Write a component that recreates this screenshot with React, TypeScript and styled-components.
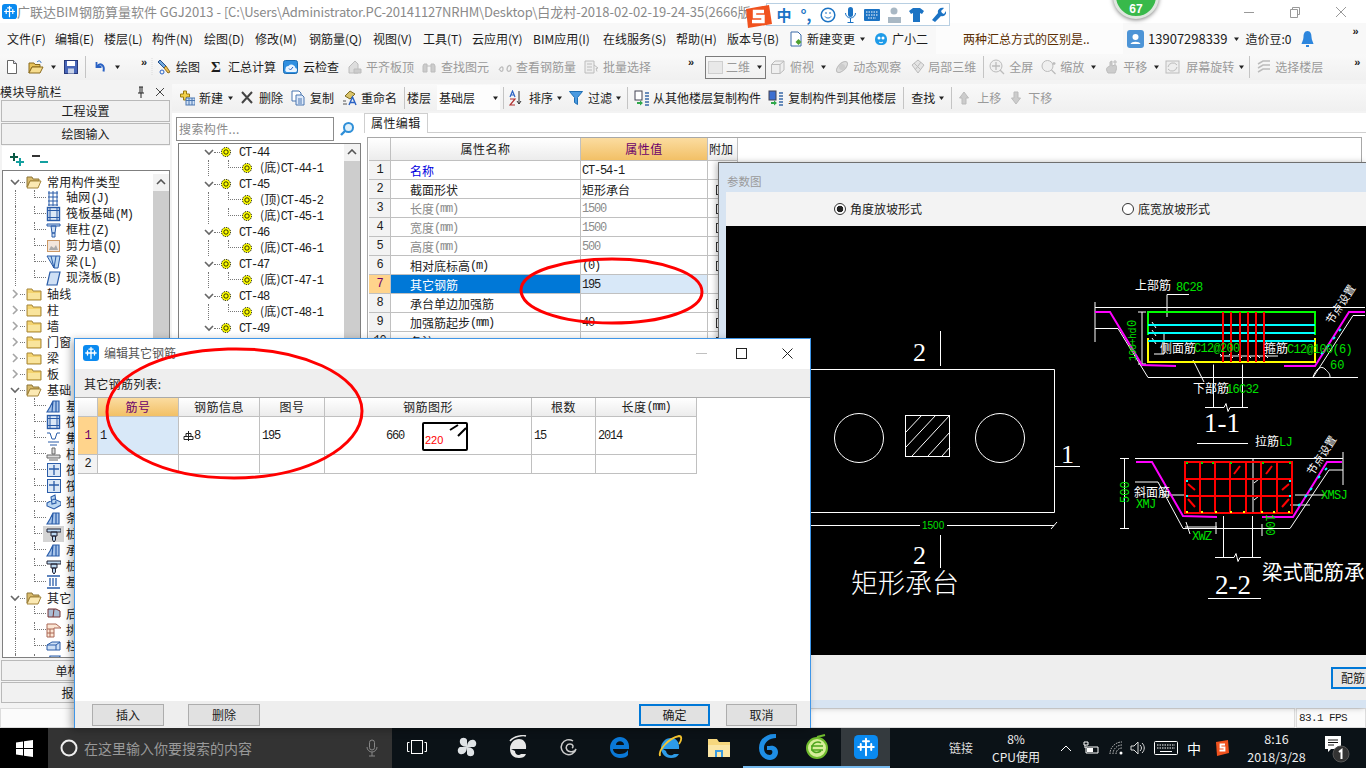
import React from "react";
import styled, { createGlobalStyle } from "styled-components";

const Global = createGlobalStyle`
  html, body { margin: 0; padding: 0; overflow: hidden; background: #f2f2f2; }
  * { box-sizing: border-box; }
  #root { width: 1366px; height: 768px; }
`;
const UI = `"Noto Sans CJK SC", "Liberation Sans", sans-serif`;

const Root = styled.div`
  position: relative; width: 1366px; height: 768px; overflow: hidden; display: flex; flex-direction: column;
  background: #f3f3f3; color: #1c1c1c; font: 12px/16px ${UI};
`;
const Mono = styled.span`
  font: 12px/16px "Liberation Mono", monospace; letter-spacing: -1.2px;
`;
const Ico = styled.svg`display: block; flex-shrink: 0;`;
const At = styled.span<{ $l?: number }>`
  display: flex; align-items: center; flex-shrink: 0; margin-left: ${p => p.$l ?? 0}px;
`;
const Sep = styled.span<{ $l: number }>`
  width: 1px; height: 22px; background: #c4c4c4; margin-left: ${p => p.$l}px; flex-shrink: 0;
`;
const Tl = styled.span<{ $l: number; $off?: boolean }>`
  margin-left: ${p => p.$l}px; white-space: nowrap; flex-shrink: 0; color: ${p => (p.$off ? "#9a9a9a" : "#1c1c1c")};
`;
const Sigma = styled.span`
  margin-left: 11px; width: 10px; font: bold 15px/16px "Liberation Serif", serif; flex-shrink: 0;
`;

/* ---------- title & menu ---------- */
const TitleBar = styled.div`
  height: 23px; background: #fff; display: flex; align-items: center; padding-left: 2px; flex-shrink: 0;
`;
const TitleText = styled.span`
  color: #8a8a8a; font-size: 13px; white-space: nowrap;
`;
const TitlePath = styled.span`letter-spacing: -.17px;`;
const WinCtl = styled.div`
  margin-left: auto; display: flex; align-items: center; padding-right: 19px;
`;
const MenuBar = styled.div`
  height: 31px; background: #f8f8f8; display: flex; align-items: center; padding: 0 0 0 7px; flex-shrink: 0;
`;
const MenuItem = styled.span<{ $w: number }>`
  width: ${p => p.$w}px; white-space: nowrap; flex-shrink: 0;
`;
const NoticeBox = styled.div`
  margin-left: 8px; width: 187px; height: 31px; background: #fcfcfc; flex-shrink: 0; display: flex; align-items: center;
  padding-left: 27px; color: #5a2d00;
`;
const Phone = styled.span`font-size: 13px; margin-left: 4px;`;
const Toolbar = styled.div`
  height: 26px; flex-shrink: 0; display: flex; align-items: center;
  background: linear-gradient(#f9f9f9, #f0f0f0); overflow: hidden;
`;
const More = styled.span<{ $l: number }>`
  margin-left: ${p => p.$l}px; font: bold 11px/12px "Liberation Sans", sans-serif; align-self: flex-start; margin-top: 2px; width: 9px; flex-shrink: 0;
`;
const Combo = styled.div`
  margin-left: 8px; width: 61px; height: 23px; border: 1px solid #7b7b7b; display: flex; align-items: center; flex-shrink: 0; padding-left: 2px; color: #9a9a9a;
`;
const Swatch = styled.span`width: 15px; height: 13px; background: #e8e8e8; border: 1px solid #cfcfcf; margin-right: 3px;`;
const FloorCombo = styled.div`
  margin-left: 6px; width: 63px; height: 25px; background: #fdfdfd; display: flex; align-items: center; padding-left: 2px; flex-shrink: 0;
`;

/* ---------- workspace ---------- */
const Workspace = styled.div`flex: 1; min-height: 0; display: flex; padding-top: 4px;`;
const LeftPanel = styled.aside`width: 170px; flex-shrink: 0; display: flex; flex-direction: column; padding-bottom: 4px;`;
const NavHead = styled.div`height: 16px; display: flex; align-items: center; font-size: 12px; letter-spacing: .4px;`;
const NavHeadIcons = styled.div`margin-left: auto; display: flex; gap: 9px; padding-right: 5px; align-items: center;`;
const NavBtn = styled.div<{ $h?: number }>`
  height: ${p => p.$h ?? 22}px; margin: 0 0 1px 1px; background: #f1f1f1; border: 1px solid #b9b9b9; text-align: center; line-height: ${p => (p.$h ?? 22) - 2}px; flex-shrink: 0;
`;
const PlusRow = styled.div`height: 24px; padding: 5px 0 0 7px; display: flex; gap: 7px; background: #fff; margin: 0 0 0 2px; flex-shrink: 0;`;
const TreeFrame = styled.div<{ $pad: number }>`
  flex: 1; min-height: 0; border: 1px solid #7f7f7f; background: #fff; display: flex; overflow: hidden; margin: 0 0 2px 2px; padding-top: ${p => p.$pad}px;
`;
const TreeList = styled.div`flex: 1; min-width: 0; overflow: hidden;`;
const TreeRow = styled.div`height: 16px; display: flex; align-items: center; white-space: nowrap;`;
const Chevron = styled.span<{ $ml: number }>`margin-left: ${p => p.$ml}px; width: 10px; display: flex; flex-shrink: 0;`;
const Dots = styled.span<{ $w: number }>`width: ${p => p.$w}px; border-top: 1px dotted #777; flex-shrink: 0;`;
const Spine = styled.span<{ $ml: number; $w: number }>`
  margin-left: ${p => p.$ml}px; width: ${p => p.$w}px; height: 16px; border-left: 1px dotted #777; flex-shrink: 0;
`;
const Elbow = styled.span<{ $w: number }>`
  width: ${p => p.$w}px; height: 8px; align-self: flex-start; border-left: 1px dotted #777; border-bottom: 1px dotted #777; flex-shrink: 0;
`;
const TreeLabel = styled.span<{ $ml: number }>`margin-left: ${p => p.$ml}px; letter-spacing: .2px;`;
const SelIcon = styled.span`display: flex; background: #d4d4d4; padding: 0 3px; margin: 0 -3px;`;
const Scroll = styled.div`width: 16px; flex-shrink: 0; background: #cdcdcd; align-self: stretch; display: flex; flex-direction: column;`;
const ScrollTop = styled.div`height: 17px; background: #f2f2f2; display: flex; align-items: center; justify-content: center;`;
const MainCol = styled.div`flex: 1; min-width: 0; display: flex; flex-direction: column; margin-left: 2px;`;
const Bar2 = styled(Toolbar)`height: 27px; margin-bottom: 2px;`;
const MainBody = styled.div`flex: 1; min-height: 0; display: flex; background: #fff;`;
const SearchCol = styled.div`width: 185px; margin-left: 4px; flex-shrink: 0; display: flex; flex-direction: column; padding-top: 4px; padding-bottom: 47px;`;
const SearchRow = styled.div`height: 24px; display: flex; align-items: center; margin-bottom: 2px;`;
const SearchInput = styled.div`
  width: 158px; height: 24px; border: 1px solid #8c8c8c; background: #fff; padding: 3px 2px; color: #8a8a8a; letter-spacing: .4px;
`;
const PropCol = styled.div`flex: 1; min-width: 0; display: flex; flex-direction: column; margin-left: 3px;`;
const TabStrip = styled.div`height: 20px; border-bottom: 1px solid #cfcfcf; display: flex; flex-shrink: 0;`;
const Tab = styled.div`
  width: 64px; height: 20px; border: 1px solid #cfcfcf; border-bottom: none; background: #fff; padding-left: 6px; line-height: 18px; letter-spacing: .4px;
`;
const GridFrame = styled.div`
  flex: 1; min-height: 0; margin: 4px 4px 0 3px; border: 1px solid #a8a8a8; padding: 0 0 0 1px; overflow: hidden;
`;
const GridRow = styled.div<{ $cols: string; $h: number }>`
  display: grid; grid-template-columns: ${p => p.$cols}; height: ${p => p.$h}px;
`;
const Head = styled.div<{ $on?: boolean }>`
  display: flex; align-items: center; justify-content: center; border-right: 1px solid #c0c0c0; border-bottom: 1px solid #c0c0c0; letter-spacing: .5px;
  background: ${p => (p.$on ? "linear-gradient(#fbdca0, #f2c066)" : "linear-gradient(#fff, #ececec)")};
  color: ${p => (p.$on ? "#6b006b" : "#1c1c1c")};
`;
const HeadTight = styled(Head)`justify-content: flex-start; padding-left: 1px; letter-spacing: 0;`;
const NumCell = styled.div<{ $on?: boolean }>`
  border-right: 1px solid #c0c0c0; border-bottom: 1px solid #c0c0c0;
  background: ${p => (p.$on ? "#ffd48c" : "#f3f3f3")}; color: ${p => (p.$on ? "#6b006b" : "#1c1c1c")};
  font: 12px/18px "Liberation Mono", monospace; letter-spacing: -1.2px; display: flex; align-items: center; justify-content: center;
`;
const Cell = styled.div<{ $pad?: number; $bg?: string; $color?: string }>`
  border-right: 1px solid #c0c0c0; border-bottom: 1px solid #c0c0c0; padding-left: ${p => p.$pad ?? 2}px;
  background: ${p => p.$bg ?? "#fff"}; color: ${p => p.$color ?? "#1c1c1c"}; white-space: nowrap; overflow: hidden;
  display: flex; align-items: center;
`;
const PropCell = styled(Cell)`padding-top: 1px;`;
const Check = styled.span`width: 10px; height: 10px; border: 1px solid #333; margin-left: 8px;`;

/* ---------- status & taskbar ---------- */
const StatusBar = styled.div`height: 20px; flex-shrink: 0; display: flex; background: #f3f3f3;`;
const StatusBox = styled.div`flex: 1; border: 1px solid #dcdcdc; background: #fbfbfb;`;
const FpsBox = styled.div`
  width: 70px; margin-left: 1px; border: 1px solid #dcdcdc; background: #fbfbfb; font: 11px/18px "Liberation Mono", monospace; padding-left: 2px; letter-spacing: -.6px;
`;
const Taskbar = styled.div`height: 40px; flex-shrink: 0; background: #0b1217; display: flex; color: #fff; align-items: center;`;
const StartBtn = styled.div`width: 48px; height: 40px; background: #000; display: flex; align-items: center; justify-content: center; flex-shrink: 0;`;
const SearchBox = styled.div`
  width: 344px; height: 40px; background: #333; display: flex; align-items: center; flex-shrink: 0; padding-left: 12px; color: #999; font-size: 14px;
`;
const SearchHint = styled.span`margin-left: 6px; white-space: nowrap; color: #999;`;
const MicWrap = styled.span`margin-left: auto; margin-right: 14px; display: flex;`;
const TaskSlot = styled.div<{ $w: number; $line?: boolean; $active?: boolean }>`
  width: ${p => p.$w}px; height: 40px; display: flex; align-items: center; justify-content: center; flex-shrink: 0;
  background: ${p => (p.$active ? "#343a3e" : "transparent")}; border-bottom: 2px solid ${p => (p.$line ? "#76b9ed" : "transparent")};
`;
const TrayText = styled.span<{ $l: number }>`margin-left: ${p => p.$l}px; white-space: nowrap; flex-shrink: 0; color: #ddd;`;
const TrayIme = styled.span`margin-left: 9px; color: #fff; font-size: 14px; flex-shrink: 0;`;
const TrayStack = styled.div<{ $l: number; $w: number }>`
  margin-left: ${p => p.$l}px; width: ${p => p.$w}px; text-align: center; flex-shrink: 0; line-height: 18px; color: #eee;
`;
const Clock = styled(TrayStack)`font-size: 12.5px;`;

/* ---------- floating windows ---------- */
const ParamWindow = styled.section`
  position: absolute; left: 718px; top: 162px; width: 648px; height: 546px; background: #d7e4f2; border-top: 1px solid #6f6f6f; border-left: 1px solid #6f6f6f;
  display: flex; flex-direction: column; box-shadow: -2px 0 6px rgba(0,0,0,.25);
`;
const ParamTitle = styled.div`height: 29px; padding: 11px 0 0 8px; color: #9a9a9a; font-size: 11.5px; line-height: 14px; flex-shrink: 0;`;
const ParamInner = styled.div`margin-left: 7px; display: flex; flex-direction: column; flex-shrink: 0;`;
const RadioRow = styled.div`height: 34px; background: #f3f3f3; display: flex; align-items: center; padding-left: 108px;`;
const Radio = styled.label<{ $l?: number }>`display: flex; align-items: center; gap: 4px; margin-left: ${p => p.$l ?? 0}px;`;
const RadioDot = styled.span<{ $on?: boolean }>`
  width: 12px; height: 12px; border: 1px solid #333; border-radius: 50%; background: ${p => (p.$on ? "radial-gradient(circle, #222 0 3px, #fff 3.6px)" : "#fff")};
`;
const Cad = styled.svg`display: block; width: 640px; height: 429px; background: #000;`;
const ParamFoot = styled.div`height: 45px; background: #eee; display: flex; justify-content: flex-end; padding-top: 12px; overflow: hidden;`;
const RebarBtn = styled.div`
  width: 35px; height: 22px; border: 2px solid #0078d7; border-right: none; background: #e6e6e6; padding-left: 8px; line-height: 18px; white-space: nowrap;
`;
const EditDialog = styled.section`
  position: absolute; left: 74px; top: 338px; width: 737px; height: 390px; background: #fff;
  border: 1px solid #3f96e8; border-bottom: none; display: flex; flex-direction: column; box-shadow: -3px 2px 8px rgba(0,0,0,.3);
`;
const DlgTitle = styled.div`height: 30px; display: flex; align-items: center; padding: 0 0 2px 8px; flex-shrink: 0;`;
const DlgTitleText = styled.span`margin-left: 5px; color: #555;`;
const DlgCtl = styled.div`margin-left: auto; display: flex; align-items: center; padding-right: 17px;`;
const DlgBand = styled.div`height: 28px; background: #eee; padding: 7px 0 0 9px; flex-shrink: 0; letter-spacing: .3px;`;
const DlgTable = styled.div`flex: 1; min-height: 0; border-top: 1px solid #aaa; padding-left: 3px;`;
const DlgFoot = styled.div`height: 27px; background: #eee; display: flex; align-items: flex-start; padding: 3px 13px 0 17px; flex-shrink: 0;`;
const DlgBtn = styled.div<{ $primary?: boolean; $l?: number; $auto?: boolean; $w?: number }>`
  width: ${p => p.$w ?? 72}px; height: 22px; text-align: center; background: #e1e1e1; line-height: ${p => (p.$primary ? 18 : 20)}px;
  border: ${p => (p.$primary ? "2px solid #0078d7" : "1px solid #adadad")};
  margin-left: ${p => (p.$auto ? "auto" : `${p.$l ?? 0}px`)};
`;
const Sogou = styled.div`
  position: absolute; left: 744px; top: 3px; height: 25px; display: flex; align-items: flex-start;
`;
const SogouMark = styled.span`position: relative; z-index: 1; margin-top: 2px; display: flex;`;
const SogouBar = styled.div`
  margin-left: -6px; width: 184px; height: 23px; border: 1px solid #b8cfe2; background: #fff; display: flex; align-items: center; padding-left: 6px;
`;
const SogouSlot = styled.span`
  width: 22px; display: flex; align-items: center; justify-content: center; color: #1b73c4; font: bold 15px/16px ${UI}; flex-shrink: 0;
`;
const Badge = styled.div`
  position: absolute; left: 1113px; top: -27px; width: 46px; height: 46px; border-radius: 50%; background: #38b94a; border: 3px solid #dfe6df;
  box-shadow: 0 1px 4px rgba(0,0,0,.5); color: #fff; font: bold 12px/14px "Liberation Sans", sans-serif; text-align: center; padding-top: 26px;
`;
const Marks = styled.svg`position: absolute; left: 0; top: 0; width: 1366px; height: 768px; pointer-events: none;`;

/* ---------- icons ---------- */
const S = ({ w = 16, h = 16, children }: { w?: number; h?: number; children: React.ReactNode }) => (
  <Ico width={w} height={h} viewBox={`0 0 ${w} ${h}`}>{children}</Ico>
);
const Caret = () => <S w={7} h={6}><path d="M1 1.500h5L3.500 5z" fill="#222" /></S>;
const Logo = ({ s = 16 }: { s?: number }) => (
  <Ico width={s} height={s} viewBox="0 0 16 16">
    <rect width="16" height="16" rx="3" fill="#0a8af0" />
    <path d="M8 2.500v11M2.800 8h10.400M6 4.200h4M4.500 6v4M11.500 6v4" stroke="#fff" strokeWidth="1.300" fill="none" strokeLinecap="round" />
  </Ico>
);
const DocIc = () => <S w={14}><path d="M2.500 1.500h6l3 3v10h-9z" fill="#fff" stroke="#666" /><path d="M8.500 1.500v3h3" fill="#dde" stroke="#666" /></S>;
const OpenIc = () => <S><path d="M1 4h5l1 1.500h5V8H4l-3 6z" fill="#e7c25b" stroke="#8a6a1d" /><path d="M4 8h11l-3 6H1z" fill="#f6dc8d" stroke="#8a6a1d" /><path d="M9 3c2-2 4-1 4 1" stroke="#2f6fbd" fill="none" /></S>;
const SaveIc = () => <S w={14}><rect x=".5" y="1.500" width="13" height="13" fill="#4866b8" stroke="#27397a" /><rect x="3" y="2" width="8" height="5" fill="#fff" /><rect x="4" y="9.500" width="6" height="5" fill="#c9d3e8" /></S>;
const UndoIc = () => <S w={12}><path d="M2.500 3v5h5" fill="none" stroke="#2a62c4" strokeWidth="1.800" /><path d="M3 7.500c3-4 8-2 6.500 5" fill="none" stroke="#2a62c4" strokeWidth="2" /></S>;
const DrawIc = () => <S w={14}><path d="M3 1l6 6-2 2-6-6z" fill="#6fa8dc" stroke="#274e8a" /><path d="M7 9l4 5 2-1-4-6z" fill="#f0c050" stroke="#8a6a1d" /><circle cx="5" cy="13" r="2" fill="none" stroke="#2a62c4" /></S>;
const CloudIc = () => <S w={15}><rect x=".5" y="1.500" width="14" height="13" rx="2" fill="#2f8fe0" stroke="#1b6bb0" /><path d="M2.500 10a3 3 0 0 1 3-3 4 4 0 0 1 7 2 2 2 0 0 1-1 4H4a2 2 0 0 1-1.500-3z" fill="#e8f4ff" /><path d="M6 9.500l1.500 1.500L10 8" stroke="#2a62c4" fill="none" /></S>;
const G = "#bcbcbc";
const FlatIc = () => <S w={14}><path d="M1 14V8l6-6 3 3v9z" fill="#ddd" stroke={G} /><path d="M6 14v-4h7v4z" fill="#ccc" stroke={G} /></S>;
const BinocIc = () => <S w={14}><path d="M2 5h3v8H1V7zM9 5h3l1 2v6H9z" fill="#ccc" stroke={G} /><path d="M5 7h4" stroke={G} /></S>;
const LenIc = () => <S w={14}><path d="M1 11c2-4 4-4 4-1s-2 3-3 1M9 11c0-5 4-6 4-2s-3 4-4 2" fill="none" stroke={G} strokeWidth="1.300" /></S>;
const BatchIc = () => <S w={15}><path d="M1 2h9v12H1zM3 5h5M3 8h5M3 11h5" fill="#eee" stroke={G} /><path d="M10 6l4 3-2 .5 1 3" fill="none" stroke={G} /></S>;
const BoxIc = () => <S w={15}><path d="M1.500 5.500L5 2h9v9l-4 3.500H1.500z M1.500 5.500H10v9 M10 5.500L14 2" fill="#efefef" stroke={G} /></S>;
const OrbitIc = () => <S w={15}><ellipse cx="8" cy="8" rx="7" ry="3.500" transform="rotate(-45 8 8)" fill="#ddd" stroke={G} /><circle cx="8" cy="8" r="3" fill="#ccc" /></S>;
const LocalIc = () => <S w={15}><path d="M8 1l6 5-6 8-6-8z" fill="#e4e4e4" stroke={G} /><path d="M4 4l7 7M11 3l-6 8" stroke={G} /></S>;
const ZoomIc = () => <S><circle cx="7" cy="7" r="6" fill="#f0f0f0" stroke={G} /><path d="M7 3v8M3 7h8M11 11l4 4" stroke={G} strokeWidth="1.300" /></S>;
const Zoom2Ic = () => <S w={15}><circle cx="6.500" cy="7" r="5.500" fill="#efefef" stroke={G} /><path d="M10.500 11l4 4M13 3v3M11.500 4.500h3" stroke={G} strokeWidth="1.300" /></S>;
const PanIc = () => <S w={15}><path d="M4 14c-2-3-2-5 0-6l2-1V3l2-1v5l3-1c2 0 2 4 0 8z" fill="#ccc" stroke={G} /><path d="M11 1v5M9 3h4" stroke={G} /></S>;
const RotIc = () => <S w={15}><rect x="1" y="2" width="13" height="12" fill="#eee" stroke={G} /><path d="M3 8a5 5 0 0 1 9-2M12 8a5 5 0 0 1-9 2" fill="none" stroke={G} /></S>;
const LayerIc = () => <S w={14}><path d="M1 5l5-3h7M1 9l5-3h7M1 13l5-3h7" fill="none" stroke={G} strokeWidth="1.500" /></S>;
const NewIc = () => <S w={15}><path d="M3 2h3v3h3v3H6v3H3V8H0V5h3z" fill="#f4d24a" stroke="#9a7b10" transform="translate(.5 -1)" /><rect x="6" y="8" width="9" height="7" fill="#cfe0f5" stroke="#4a76b0" /><path d="M6 10.500h9M9 8v7M12 8v7" stroke="#4a76b0" /></S>;
const DelIc = () => <S w={12}><path d="M1 2l10 11M11 2L1 13" stroke="#444" strokeWidth="2" /></S>;
const CopyIc = () => <S w={14}><path d="M1 1h7l2 2v8H1z" fill="#fff" stroke="#4a76b0" /><path d="M5 5h6l2 2v8H5z" fill="#dfeafa" stroke="#4a76b0" /><path d="M7 9h4M7 11h4M7 13h4" stroke="#4a76b0" /></S>;
const RenIc = () => <S w={15}><path d="M8 1l5 3-5 5-5-3z" fill="#d9c36a" stroke="#7b6a20" /><path d="M7 15l3.500-8 3.500 8M8.500 12.500h4" stroke="#2a62c4" strokeWidth="1.400" fill="none" /><path d="M1 14h4M1 11h3" stroke="#555" /></S>;
const AzIc = () => <S w={13}><path d="M1 7l2.500-6L6 7M2 5h3" stroke="#2a62c4" strokeWidth="1.200" fill="none" /><path d="M1 9h5l-5 6h5" stroke="#b03030" strokeWidth="1.200" fill="none" /><path d="M10 1v13M8 11l2 3 2-3" stroke="#333" fill="none" /></S>;
const FunnelIc = () => <S w={14}><path d="M.5 1.500h13L8.500 7.500v7l-3-2v-5z" fill="#4a9ae0" stroke="#1f6fb5" /></S>;
const CopyFloorIc = ({ flip }: { flip?: boolean }) => <S><rect x="1" y="1" width="7" height="9" fill={flip ? "#3d6fd0" : "#fff"} stroke="#445" /><path d="M3 12h3v-1.500L9 13l-3 2.500V14H3z" fill="#2fa84a" /><path d="M11 3h4M11 6h4M11 9h4M11 12h4M11 15h4" stroke="#3a6aa8" strokeWidth="1.400" /></S>;
const UpIc = ({ down }: { down?: boolean }) => <S w={10}><path d={down ? "M3 2h4v6h2.500L5 14 .5 8H3z" : "M3 14h4V8h2.500L5 2 .5 8H3z"} fill="#ccc" stroke="#bbb" /></S>;
const DocGreenIc = () => <S w={14}><path d="M2 1h7l3 3v11H2z" fill="#fff" stroke="#3a6aa8" /><path d="M9.500 8l3 3-3 3-3-3z" fill="#4fa030" /></S>;
const RobotIc = () => <S><path d="M2 8a6 6 0 1 1 12 0c0 4-2 6-6 6s-6-2-6-6z" fill="#1f9be8" /><circle cx="6" cy="7" r="1.500" fill="#fff" /><circle cx="10" cy="7" r="1.500" fill="#fff" /><path d="M6 11c1 1 3 1 4 0" stroke="#fff" fill="none" /></S>;
const UserIc = () => <S w={17} h={18}><rect width="17" height="18" rx="3" fill="#4d94d6" /><circle cx="8.500" cy="7" r="3" fill="#fff" /><path d="M3.500 14c1-3 9-3 10 0z" fill="#fff" /></S>;
const BellIc = () => <S w={13} h={18}><path d="M6.500 1c3 0 4 3 4 6 0 3 2 6 2 7H.5c0-1 2-4 2-7 0-3 1-6 4-6z" fill="#2d86dd" /><path d="M5 15h3v2H5z" fill="#2d86dd" /></S>;
const Grip = () => <S w={4} h={22}><path d="M1 2v18" stroke="#dadada" strokeDasharray="1 1" /></S>;
const FolderClosed = () => <S><path d="M1 3h5l1 2h8v9H1z" fill="#f4d36f" stroke="#a4853a" /><path d="M2 7h12v6H2z" fill="#f9e49c" /></S>;
const FolderOpen = () => <S><path d="M1 3h5l1 2h6v2H4L1 13z" fill="#d9bb6c" stroke="#8d7436" /><path d="M4 7h11l-3 7H1z" fill="#fbe9b3" stroke="#a4853a" /></S>;
const ChevD = () => <S w={10} h={8}><path d="M1 2l4 4 4-4" stroke="#666" strokeWidth="1.600" fill="none" /></S>;
const ChevR = () => <S w={10} h={10}><path d="M3 1l4 4-4 4" stroke="#a5a5a5" strokeWidth="1.600" fill="none" /></S>;
const ChevUp = () => <S w={10} h={7}><path d="M1 5l4-4 4 4" stroke="#555" strokeWidth="1.600" fill="none" /></S>;
const Gear = () => <S w={12} h={12}><circle cx="6" cy="6" r="4.500" fill="#ff0" stroke="#000" strokeDasharray="1.300 1" /><circle cx="6" cy="6" r="2.200" fill="#ff0" stroke="#000" strokeWidth=".8" /></S>;

const B = "#2a5ca8";
const Kind: Record<string, React.ReactNode> = {
  grid: <path d="M2 3h10M2 7h10M2 11h10M2 15h10M3 1v15M7 1v15M11 1v15" stroke={B} fill="none" />,
  raft: <><rect x="1.500" y="1.500" width="12" height="13" fill="#dcE8f6" stroke={B} strokeWidth="1.400" /><path d="M4 1.500v13M11 1.500v13M1.500 4.500h12M1.500 11.500h12" stroke={B} /></>,
  col: <path d="M1 2h13v2H1zM5 4h5l-1 7H6zM6 11h3v4H6z" fill="#cfe0f5" stroke={B} />,
  wall: <><rect x="1.500" y="2.500" width="12" height="11" fill="#f2e6dc" stroke="#c96" /><path d="M3 12l2-4 3 2 2-3 2 5z" fill="#aaa" /></>,
  beam: <path d="M1 2h13l-2 12H8zM5 2l3 12M10 2l-2 12" fill="#bcd8f2" stroke={B} />,
  slab: <path d="M4 2h10l-3 13H1z" fill="#cfe0f5" stroke={B} strokeWidth="1.200" />,
  found: <path d="M1 14l3-5 3-6h6v11zM7 3l-1 11M10 3v11" fill="#a8c5ea" stroke={B} strokeWidth="1.200" />,
  pit: <path d="M1 3h3l2 6h3l2-6h3M2 12h11M4 15h7" fill="none" stroke={B} />,
  cap: <path d="M6 2h3v6H6zM1 9h13v3H1zM3 14h9" fill="#ddd" stroke="#666" />,
  cross: <><rect x="1.500" y="1.500" width="13" height="13" fill="#dce8f6" stroke={B} /><path d="M3 7h10M8 3v10" stroke={B} strokeWidth="1.300" /></>,
  iso: <path d="M1 9l7-4 7 3v3l-7 4-7-3zM5 3l4-2 1 8-4 1z" fill="#bcd8f2" stroke={B} strokeWidth="1.100" />,
  pile: <path d="M1 3h14v3H1zM5 6h6v4H5zM6.500 10h3v4L8 16l-1.500-2z" fill="#bcd8f2" stroke="#223" />,
  base: <path d="M1 2h13M1 14h13M4 4v8M7 4v8M10 4v8" stroke={B} strokeWidth="1.300" fill="none" />,
  post: <path d="M2 3h8l4 2v6H2zM8 3l-1 8" fill="#a9bcd4" stroke="#733" />,
  ledge: <path d="M1 2h9l5 4H8v9H1zM1 7h7M1 11h7M4 7v8" fill="#fbe6d4" stroke="#a65" />,
  rail: <path d="M1 7l5-3h8v8H1zM1 7h9v5M10 7l4-3" fill="#cfe0f5" stroke={B} />,
};
const Kd = ({ k }: { k: string }) => <S w={15}>{Kind[k]}</S>;

type L = { open?: boolean; group?: boolean; k?: string; t: React.ReactNode; sel?: boolean };
const navTree: L[] = [
  { group: true, open: true, t: "常用构件类型" },
  { k: "grid", t: <>轴网<Mono>(J)</Mono></> },
  { k: "raft", t: <>筏板基础<Mono>(M)</Mono></> },
  { k: "col", t: <>框柱<Mono>(Z)</Mono></> },
  { k: "wall", t: <>剪力墙<Mono>(Q)</Mono></> },
  { k: "beam", t: <>梁<Mono>(L)</Mono></> },
  { k: "slab", t: <>现浇板<Mono>(B)</Mono></> },
  { group: true, t: "轴线" }, { group: true, t: "柱" }, { group: true, t: "墙" },
  { group: true, t: "门窗" }, { group: true, t: "梁" }, { group: true, t: "板" },
  { group: true, open: true, t: "基础" },
  { k: "found", t: "基" }, { k: "raft", t: "筏" }, { k: "pit", t: "集" }, { k: "cap", t: "柱" },
  { k: "cross", t: "筏" }, { k: "cross", t: "筏" }, { k: "iso", t: "独" }, { k: "found", t: "条" },
  { k: "pile", t: "桩", sel: true }, { k: "found", t: "承" }, { k: "pile", t: "桩" }, { k: "base", t: "基" },
  { group: true, open: true, t: "其它" },
  { k: "post", t: "后" }, { k: "ledge", t: "挑" }, { k: "rail", t: "栏" }, { k: "slab", t: "" },
];
const ctTree: [string, string[]][] = [
  ["CT-44", ["底|CT-44-1"]],
  ["CT-45", ["顶|CT-45-2", "底|CT-45-1"]],
  ["CT-46", ["底|CT-46-1"]],
  ["CT-47", ["底|CT-47-1"]],
  ["CT-48", ["底|CT-48-1"]],
  ["CT-49", []],
];
const PROP_COLS = "22px 190px 127px 30px";
type P = { n: number; name: React.ReactNode; v?: React.ReactNode; c?: string; sel?: boolean; gray?: boolean; box?: boolean };
const props: P[] = [
  { n: 1, name: "名称", v: <Mono>CT-54-1</Mono>, c: "#0000e0" },
  { n: 2, name: "截面形状", v: "矩形承台", box: true },
  { n: 3, name: <>长度<Mono>(mm)</Mono></>, v: <Mono>1500</Mono>, gray: true, box: true },
  { n: 4, name: <>宽度<Mono>(mm)</Mono></>, v: <Mono>1500</Mono>, gray: true, box: true },
  { n: 5, name: <>高度<Mono>(mm)</Mono></>, v: <Mono>500</Mono>, gray: true, box: true },
  { n: 6, name: <>相对底标高<Mono>(m)</Mono></>, v: <Mono>(0)</Mono>, box: true },
  { n: 7, name: "其它钢筋", v: <Mono>195</Mono>, sel: true },
  { n: 8, name: "承台单边加强筋", box: true },
  { n: 9, name: <>加强筋起步<Mono>(mm)</Mono></>, v: <Mono>40</Mono>, box: true },
  { n: 10, name: "备注", box: true },
];
const DLG_COLS = "20px 81px 81px 65px 207px 64px 101px";

const W = "#fff", GR = "#00e000", MG = "#ff00ff", RD = "#ff0000", CY = "#00ffff", YL = "#ffff00";
const CJK = `"Noto Sans CJK SC", sans-serif`;
const MN = `"Liberation Mono", monospace`;
const CadDrawing = () => (
  <Cad viewBox="726 226 640 429">
    <g fill="none" stroke={W} strokeWidth="1">
      <path d="M760 369.500H1054.500V512.500H760" />
      <circle cx="859" cy="438" r="24.500" />
      <circle cx="1000" cy="438" r="24.500" />
      <rect x="905.500" y="415.500" width="44" height="41" />
      <path d="M906 432l16-17M906 447l30-32M912 456l38-41M928 456l22-24M942 456l8-9" />
      <path d="M940.500 331v35M940.500 535v33M1054 466.500h26M760 525.500h160M947 525.500h107M1051 529l6-7" />
    </g>
    <text x="913" y="361" fill={W} fontSize="26" fontFamily="Liberation Serif, serif">2</text>
    <text x="913" y="564" fill={W} fontSize="26" fontFamily="Liberation Serif, serif">2</text>
    <text x="1061" y="463" fill={W} fontSize="26" fontFamily="Liberation Serif, serif">1</text>
    <text x="922" y="529" fill={GR} fontSize="10" fontFamily="Liberation Sans, sans-serif">1500</text>
    <text x="851" y="593" fill={W} fontSize="27" fontFamily={CJK} fontWeight="300">矩形承台</text>

    {/* section 1-1 */}
    <g fill="none" stroke={W}>
      <path d="M1095 307.500H1365M1095 302v40M1095 328.500h23L1148 377.500H1358M1313 377.500L1353 315.500H1365M1167 317V294.500H1189" />
      <path d="M1142 312v52M1138 312h8M1138 364h8M1152 322l4 6M1152 330l4 6M1152 338l4 6M1154 354h10v-20" />
      <path d="M1193 360l11 22M1213.500 364.500v43M1242.500 364.500V407.500M1205 407.500h19l2-4 2 8 2-4h18" />
      <path d="M1220 354l4 4M1229 354l4 4M1238 354l4 4M1247 354l4 4M1256 354l4 4M1264 354l4 4M1220 356h58" />
      <path d="M1313 377c3-8 8-12 12-8s5 5 5 8" />
    </g>
    <path d="M1095 312h15L1142 365l34 1M1284 366h31L1349 312h16" stroke={MG} strokeWidth="2" fill="none" />
    <path d="M1148 335V312H1315V335" stroke="#00ff00" strokeWidth="2" fill="none" />
    <path d="M1148 338V362H1315V338" stroke={YL} strokeWidth="2" fill="none" />
    <path d="M1148 325h167M1148 333h167M1148 341h167" stroke={CY} strokeWidth="2" fill="none" />
    <path d="M1223 312v50M1231 312v50M1240 312v50M1248 312v50M1256 312v50M1264 312v50" stroke={RD} strokeWidth="2" fill="none" />
    <path d="M1321 354l2-2M1327 347l2-2M1333 339l2-2M1339 331l2-2" stroke={CY} strokeWidth="2" />
    <g fontSize="12" fontFamily={MN}>
      <text x="1135" y="290" fill={W} fontFamily={CJK}>上部筋</text>
      <text x="1176" y="291" fill={GR} letterSpacing="-.5">8C28</text>
      <text x="1160" y="353" fill={W} fontFamily={CJK}>侧面筋</text>
      <text x="1194" y="352" fill={GR} letterSpacing="-.7">C12@200</text>
      <text x="1264" y="353" fill={W} fontFamily={CJK}>箍筋</text>
      <text x="1287" y="353" fill={GR} letterSpacing="-.7">C12@100(6)</text>
      <text x="1193" y="393" fill={W} fontFamily={CJK}>下部筋</text>
      <text x="1226" y="393" fill={GR} letterSpacing="-.7">16C32</text>
      <text x="1330" y="369" fill={GR}>60</text>
      <text transform="translate(1136 361) rotate(-90)" fill={GR} fontSize="10" letterSpacing="-.5">100+hd</text>
      <text transform="translate(1136 327) rotate(-90)" fill={GR}>0</text>
      <text transform="translate(1332 325) rotate(-57)" fill={W} fontFamily={CJK} fontSize="11">节点设置</text>
    </g>
    <text x="1204" y="432" fill={W} fontSize="27" fontFamily="Liberation Serif, serif">1-1</text>
    <path d="M1197 443.500h51" stroke={W} />

    {/* section 2-2 */}
    <g fill="none" stroke={W}>
      <path d="M1135 458.500H1343M1343 452v33M1135 482h23L1183 528.500H1290L1329 470H1343M1124.500 458v70M1120 458.500h9M1120 528.500h9" />
      <path d="M1223.500 516v41.500M1252.500 516V557.500M1215 557.500h19l2-4 2 8 2-4h21M1253 514V458" />
      <path d="M1185 527h32M1186 522l4 12M1216 522v12M1262 524v12M1295 495h30M1290 505h20M1162 495l24 0M1254 483l5-4M1254 500l5-4" />
    </g>
    <path d="M1136 462h16L1183 516l34 1M1262 517h31L1327 462h15" stroke={MG} strokeWidth="2" fill="none" />
    <rect x="1185" y="462" width="107" height="51" fill="none" stroke={RD} strokeWidth="2" />
    <path d="M1200 462v51M1215 462v51M1230 462v51M1246 462v51M1261 462v51M1277 462v51M1185 479h107M1185 496h107" stroke={RD} strokeWidth="2" />
    <path d="M1188 484l7 6M1188 499l7 8M1289 484l-7 6M1289 499l-7 8M1240 466l-6 8M1272 466l-6 8" stroke={RD} strokeWidth="2" />
    <path d="M1186 463h2M1201 463h2M1212 463h2M1230 463h2M1262 463h2M1289 463h2" stroke={GR} strokeWidth="2" />
    <path d="M1186 512h2M1201 512h2M1215 512h2M1230 512h2M1243 512h2M1261 512h2M1273 512h2M1288 512h2" stroke={YL} strokeWidth="2" />
    <path d="M1186 481h2M1186 496h2M1289 481h2M1289 496h2M1298 506l2-2M1305 497l2-2M1310 490l2-2M1318 478l2-2M1325 470l2-2" stroke={CY} strokeWidth="2" />
    <g fontSize="12" fontFamily={MN}>
      <text x="1255" y="446" fill={W} fontFamily={CJK}>拉筋</text>
      <text x="1279" y="446" fill={GR} letterSpacing="-.7">LJ</text>
      <text x="1134" y="497" fill={W} fontFamily={CJK}>斜面筋</text>
      <text x="1136" y="508" fill={GR} letterSpacing="-.7">XMJ</text>
      <text x="1321" y="499" fill={GR} letterSpacing="-.7">XMSJ</text>
      <text x="1192" y="540" fill={GR} letterSpacing="-.7">XWZ</text>
      <text transform="translate(1129 503) rotate(-90)" fill={GR}>500</text>
      <text transform="translate(1266 514) rotate(90)" fill={GR}>100</text>
      <text transform="translate(1313 476) rotate(-57)" fill={W} fontFamily={CJK} fontSize="11">节点设置</text>
    </g>
    <text x="1215" y="594" fill={W} fontSize="27" fontFamily="Liberation Serif, serif">2-2</text>
    <path d="M1208 598.500h53" stroke={W} />
    <text x="1262" y="580" fill={W} fontSize="20.500" fontFamily={CJK}>梁式配筋承</text>
  </Cad>
);

export default function App() {
  return (
    <Root>
      <Global />
      <TitleBar>
        <Logo s={15} />
        <TitleText>广联达BIM钢筋算量软件 GGJ2013 - <TitlePath>[C:\Users\Administrator.PC-20141127NRHM\Desktop\</TitlePath>白龙村-2018-02-02-19-24-35(2666版</TitleText>
        <WinCtl>
          <S w={12} h={12}><path d="M1 6.500h10" stroke="#999" /></S>
          <At $l={34}><S w={12} h={12}><path d="M1.500 3.500h7v8h-7zM3.500 3.500v-2h7v7H8.500" fill="none" stroke="#999" /></S></At>
          <At $l={34}><S w={12} h={12}><path d="M1 1l10 10M11 1L1 11" stroke="#999" /></S></At>
        </WinCtl>
      </TitleBar>
      <MenuBar>
        {([["文件(F)", 48], ["编辑(E)", 49], ["楼层(L)", 48], ["构件(N)", 52], ["绘图(D)", 51], ["修改(M)", 54], ["钢筋量(Q)", 64], ["视图(V)", 50], ["工具(T)", 49], ["云应用(Y)", 61], ["BIM应用(I)", 70], ["在线服务(S)", 73], ["帮助(H)", 51], ["版本号(B)", 62]] as [string, number][]).map(([t, w]) => (
          <MenuItem key={t} $w={w}>{t}</MenuItem>
        ))}
        <DocGreenIc />
        <Tl $l={4}>新建变更</Tl>
        <At $l={4}><Caret /></At>
        <At $l={7}><RobotIc /></At>
        <Tl $l={3}>广小二</Tl>
        <NoticeBox>两种汇总方式的区别是..</NoticeBox>
        <At $l={4}><UserIc /></At>
        <Phone>13907298339</Phone>
        <At $l={6}><Caret /></At>
        <Tl $l={5}>造价豆:0</Tl>
        <At $l={10}><BellIc /></At>
        <More $l={38}>»</More>
      </MenuBar>
      <Toolbar>
        <At $l={5}><DocIc /></At>
        <At $l={9}><OpenIc /></At>
        <At $l={6}><Caret /></At>
        <At $l={7}><SaveIc /></At>
        <Sep $l={7} />
        <At $l={8}><UndoIc /></At>
        <At $l={8}><Caret /></At>
        <More $l={20}>»</More>
        <At $l={1}><Grip /></At>
        <At $l={2}><DrawIc /></At>
        <Tl $l={5}>绘图</Tl>
        <Sigma>Σ</Sigma>
        <Tl $l={7}>汇总计算</Tl>
        <At $l={7}><CloudIc /></At>
        <Tl $l={5}>云检查</Tl>
        <At $l={9}><FlatIc /></At>
        <Tl $l={4} $off>平齐板顶</Tl>
        <At $l={8}><BinocIc /></At>
        <Tl $l={5} $off>查找图元</Tl>
        <At $l={9}><LenIc /></At>
        <Tl $l={4} $off>查看钢筋量</Tl>
        <At $l={8}><BatchIc /></At>
        <Tl $l={4} $off>批量选择</Tl>
        <More $l={37}>»</More>
        <Combo><Swatch />二维<At $l={6}><Caret /></At></Combo>
        <At $l={4}><BoxIc /></At>
        <Tl $l={5} $off>俯视</Tl>
        <At $l={6}><Caret /></At>
        <At $l={7}><OrbitIc /></At>
        <Tl $l={4} $off>动态观察</Tl>
        <At $l={9}><LocalIc /></At>
        <Tl $l={3} $off>局部三维</Tl>
        <Sep $l={7} />
        <At $l={5}><ZoomIc /></At>
        <Tl $l={4} $off>全屏</Tl>
        <At $l={8}><Zoom2Ic /></At>
        <Tl $l={4} $off>缩放</Tl>
        <At $l={6}><Caret /></At>
        <At $l={7}><PanIc /></At>
        <Tl $l={4} $off>平移</Tl>
        <At $l={6}><Caret /></At>
        <At $l={5}><RotIc /></At>
        <Tl $l={6} $off>屏幕旋转</Tl>
        <At $l={4}><Caret /></At>
        <Sep $l={4} />
        <At $l={7}><LayerIc /></At>
        <Tl $l={4} $off>选择楼层</Tl>
        <More $l={31}>»</More>
      </Toolbar>
      <Workspace>
        <LeftPanel>
          <NavHead>模块导航栏
            <NavHeadIcons>
              <S w={10} h={12}><path d="M3 1h4M4 1v6M6 1v6M2 7h6M5 7v5" stroke="#222" fill="none" /></S>
              <S w={10} h={10}><path d="M1 1l8 8M9 1L1 9" stroke="#444" /></S>
            </NavHeadIcons>
          </NavHead>
          <NavBtn>工程设置</NavBtn>
          <NavBtn>绘图输入</NavBtn>
          <PlusRow>
            <S w={16} h={16}><path d="M5 2v8M1 6h8" stroke="#0a5a45" strokeWidth="2" /><path d="M11 7v8M7 11h8" stroke="#14a0a0" strokeWidth="2" /></S>
            <S w={16} h={16}><path d="M0 5h8" stroke="#333" strokeWidth="2" /><path d="M8 11h8" stroke="#14a0a0" strokeWidth="2" /></S>
          </PlusRow>
          <TreeFrame $pad={3}>
            <TreeList>
              {navTree.map((r, i) =>
                r.group ? (
                  <TreeRow key={i}>
                    <Chevron $ml={7}>{r.open ? <ChevD /> : <ChevR />}</Chevron>
                    <Dots $w={5} />
                    <At $l={1}>{r.open ? <FolderOpen /> : <FolderClosed />}</At>
                    <TreeLabel $ml={5}>{r.t}</TreeLabel>
                  </TreeRow>
                ) : (
                  <TreeRow key={i}>
                    <Spine $ml={12} $w={19} />
                    <Elbow $w={12} />
                    {r.sel ? <SelIcon><Kd k={r.k!} /></SelIcon> : <Kd k={r.k!} />}
                    <TreeLabel $ml={5}>{r.t}</TreeLabel>
                  </TreeRow>
                )
              )}
            </TreeList>
            <Scroll><ScrollTop><ChevUp /></ScrollTop></Scroll>
          </TreeFrame>
          <NavBtn $h={21}>单构件输入</NavBtn>
          <NavBtn $h={21}>报表预览</NavBtn>
        </LeftPanel>
        <MainCol>
          <Bar2>
            <At $l={8}><NewIc /></At>
            <Tl $l={4}>新建</Tl>
            <At $l={4}><Caret /></At>
            <At $l={7}><DelIc /></At>
            <Tl $l={6}>删除</Tl>
            <At $l={8}><CopyIc /></At>
            <Tl $l={5}>复制</Tl>
            <At $l={8}><RenIc /></At>
            <Tl $l={4}>重命名</Tl>
            <Sep $l={7} />
            <Tl $l={2}>楼层</Tl>
            <FloorCombo>基础层<At $l={17}><Caret /></At></FloorCombo>
            <Sep $l={3} />
            <At $l={5}><AzIc /></At>
            <Tl $l={7}>排序</Tl>
            <At $l={3}><Caret /></At>
            <At $l={6}><FunnelIc /></At>
            <Tl $l={5}>过滤</Tl>
            <At $l={3}><Caret /></At>
            <Sep $l={5} />
            <At $l={6}><CopyFloorIc /></At>
            <Tl $l={3}>从其他楼层复制构件</Tl>
            <At $l={7}><CopyFloorIc flip /></At>
            <Tl $l={4}>复制构件到其他楼层</Tl>
            <Sep $l={7} />
            <Tl $l={7}>查找</Tl>
            <At $l={3}><Caret /></At>
            <Sep $l={6} />
            <At $l={7}><UpIc /></At>
            <Tl $l={8} $off>上移</Tl>
            <At $l={10}><UpIc down /></At>
            <Tl $l={7} $off>下移</Tl>
          </Bar2>
          <MainBody>
            <SearchCol>
              <SearchRow>
                <SearchInput>搜索构件...</SearchInput>
                <At $l={5}>
                  <S w={16} h={16}><circle cx="9.500" cy="6.500" r="4.500" fill="#dff0fb" stroke="#2f8fd8" strokeWidth="2" /><path d="M6 10l-4 4" stroke="#2f8fd8" strokeWidth="2.400" /></S>
                </At>
              </SearchRow>
              <TreeFrame $pad={0}>
                <TreeList>
                  {ctTree.map(([p, kids]) => (
                    <React.Fragment key={p}>
                      <TreeRow>
                        <Chevron $ml={25}><ChevD /></Chevron>
                        <Dots $w={6} />
                        <Gear />
                        <TreeLabel $ml={7}><Mono>{p}</Mono></TreeLabel>
                      </TreeRow>
                      {kids.map(k => (
                        <TreeRow key={k}>
                          <Spine $ml={29} $w={20} />
                          <Elbow $w={13} />
                          <Gear />
                          <TreeLabel $ml={7}>({k.split("|")[0]})<Mono>{k.split("|")[1]}</Mono></TreeLabel>
                        </TreeRow>
                      ))}
                    </React.Fragment>
                  ))}
                </TreeList>
                <Scroll><ScrollTop><ChevUp /></ScrollTop></Scroll>
              </TreeFrame>
            </SearchCol>
            <PropCol>
              <TabStrip><Tab>属性编辑</Tab></TabStrip>
              <GridFrame>
                <GridRow $cols={PROP_COLS} $h={23}>
                  <Head /><Head>属性名称</Head><Head $on>属性值</Head><HeadTight>附加</HeadTight>
                </GridRow>
                {props.map(p => (
                  <GridRow key={p.n} $cols={PROP_COLS} $h={19}>
                    <NumCell $on={p.sel}>{p.n}</NumCell>
                    <PropCell $pad={19} $bg={p.sel ? "#0078d7" : undefined} $color={p.sel ? "#fff" : p.gray ? "#8c8c8c" : p.c}>{p.name}</PropCell>
                    <PropCell $pad={1} $bg={p.sel ? "#d8e8f8" : undefined} $color={p.gray ? "#8c8c8c" : undefined}>{p.v}</PropCell>
                    <PropCell $pad={0}>{p.box && <Check />}</PropCell>
                  </GridRow>
                ))}
              </GridFrame>
            </PropCol>
          </MainBody>
        </MainCol>
      </Workspace>
      <StatusBar>
        <StatusBox />
        <FpsBox>83.1 FPS</FpsBox>
      </StatusBar>
      <Taskbar>
        <StartBtn>
          <S w={17} h={17}><path d="M0 2.500L7 1.500v6.500H0zM8 1.300L17 0v8H8zM0 9h7v6.500L0 14.500zM8 9h9v8l-9-1.300z" fill="#fff" /></S>
        </StartBtn>
        <SearchBox>
          <S w={18} h={18}><circle cx="9" cy="9" r="7.500" fill="none" stroke="#eee" strokeWidth="2" /></S>
          <SearchHint>在这里输入你要搜索的内容</SearchHint>
          <MicWrap>
            <S w={12} h={18}><rect x="3.500" y="1" width="5" height="10" rx="2.500" fill="none" stroke="#888" /><path d="M1 8a5 5 0 0 0 10 0M6 13v4M3 17h6" fill="none" stroke="#888" /></S>
          </MicWrap>
        </SearchBox>
        <TaskSlot $w={50}><S w={20} h={16}><rect x="4.500" y="1.500" width="11" height="13" fill="none" stroke="#fff" /><path d="M2.500 3.500h-2v9h2M17.500 3.500h2v9h-2" fill="none" stroke="#fff" /></S></TaskSlot>
        <TaskSlot $w={50}><S w={22} h={22}><path d="M11 11C6 11 3 8 4 4c1-3 6-3 7 0zM11 11c0-5 3-8 7-7 3 1 3 6 0 7zM11 11c5 0 8 3 7 7-1 3-6 3-7 0zM11 11c0 5-3 8-7 7-3-1-3-6 0-7z" fill="#dfe3e6" /></S></TaskSlot>
        <TaskSlot $w={52}><S w={22} h={24}><path d="M4 14h15c1-7-3-10-7-10-5 0-9 4-9 10s4 9 9 9c3 0 6-1 7-4h-5c-2 2-6 1-6-3zM7 11h7c0-4-7-4-7 0z" fill="#e8e8e8" /><path d="M3 6c4-5 13-6 16-5" stroke="#e8e8e8" fill="none" strokeWidth="1.500" /></S></TaskSlot>
        <TaskSlot $w={50}><S w={20} h={20}><path d="M14 4a7.500 7.500 0 1 0 3 8c-1 3-7 4-9 1-2-3 0-6 3-6s4 3 2 4" fill="none" stroke="#ccc" strokeWidth="1.500" /></S></TaskSlot>
        <TaskSlot $w={52}><S w={24} h={24}><path d="M5 14h16c1-8-4-12-9-12C6 2 2 7 2 13c0 6 5 10 10 10 4 0 7-1 8-3v-5c-2 3-5 4-8 4-4 0-7-2-7-5zM8 10c0-5 8-5 8 0z" fill="#0a78d7" /></S></TaskSlot>
        <TaskSlot $w={48}><S w={26} h={26}><path d="M6 15h16c1-8-4-11-8-11-6 0-10 5-10 10s4 10 10 10c4 0 6-1 8-4h-5c-2 2-7 2-8-3zM9 11h8c0-4-8-4-8 0z" fill="#2d9be8" /><path d="M3 22C1 16 12 4 22 2c3 0 3 4 0 8" fill="none" stroke="#f4c430" strokeWidth="1.800" /></S></TaskSlot>
        <TaskSlot $w={49}><S w={24} h={22}><path d="M1 3h9l2 3h11v15H1z" fill="#f6d77e" /><path d="M1 9h22v12H1z" fill="#fbe6a6" /><path d="M8 21v-7h8v7h-2v-5h-4v5z" fill="#3a9be0" /></S></TaskSlot>
        <TaskSlot $w={49} $line><S w={24} h={30}><path d="M20 2c-9-1-17 5-17 14 0 7 5 12 11 12 5 0 8-4 8-8s-4-7-8-6h-3v4h4c2 0 2 5-1 5-4 0-6-3-6-7 0-6 6-10 12-10z" fill="#1e8ee6" /></S></TaskSlot>
        <TaskSlot $w={49} $line><S w={24} h={26}><circle cx="12" cy="14" r="10" fill="#d7ee9a" stroke="#6fbb2d" strokeWidth="2" /><path d="M6 12h12M6 16h12M16 9c-3-2-8-1-9 4s4 7 9 4" fill="none" stroke="#4da51e" strokeWidth="1.500" /><path d="M12 3l8-2" stroke="#6fbb2d" strokeWidth="2" /></S></TaskSlot>
        <TaskSlot $w={49} $line $active><Logo s={24} /></TaskSlot>
        <TrayText $l={59}>链接</TrayText>
        <TrayStack $l={15} $w={56}>8%<br />CPU使用</TrayStack>
        <At $l={16}><S w={12} h={8}><path d="M1 7l5-5 5 5" stroke="#fff" fill="none" /></S></At>
        <At $l={11}><S w={16} h={14}><path d="M1 1h4v3H1zM2 4v3M3 6h12v6H3z" fill="none" stroke="#fff" /><path d="M4 7h6v4H4z" fill="#fff" /></S></At>
        <At $l={10}><S w={16} h={14}><path d="M1 13a12 12 0 0 1 12-12M4 13a9 9 0 0 1 9-9M7 13a6 6 0 0 1 6-6" fill="none" stroke="#ccc" strokeDasharray="1.500 1" /><circle cx="12" cy="12" r="1.500" fill="#fff" /></S></At>
        <At $l={5}><S w={16} h={14}><path d="M1 5h3l4-4v12L4 9H1zM10 4c2 2 2 4 0 6M12 2c3 3 3 7 0 10" fill="none" stroke="#ddd" /></S></At>
        <At $l={8}><S w={24} h={14}><rect x=".5" y=".5" width="23" height="13" rx="1" fill="none" stroke="#fff" /><path d="M3 4h18M3 7h18" stroke="#fff" strokeDasharray="1.500 1" /><path d="M6 10.500h12" stroke="#fff" /></S></At>
        <TrayIme>中</TrayIme>
        <At $l={13}><S w={16} h={18}><path d="M2 3l12-2 1 13-12 3z" fill="#f0521e" /><path d="M11 5.500H6.500v3H10.500v3H5.500" fill="none" stroke="#fff" strokeWidth="1.800" /></S></At>
        <Clock $l={14} $w={65}>8:16<br />2018/3/28</Clock>
        <At $l={16}>
          <S w={26} h={32}>
            <path d="M0 4h16v13H6l-3 3v-3H0z" fill="#fff" />
            <path d="M3 8h10M3 10.500h10M3 13h6" stroke="#111" />
            <circle cx="16" cy="22" r="8" fill="#333" stroke="#555" />
            <path d="M14 20l2.500-2v9" stroke="#fff" strokeWidth="2" fill="none" />
          </S>
        </At>
      </Taskbar>

      <ParamWindow>
        <ParamTitle>参数图</ParamTitle>
        <ParamInner>
          <RadioRow>
            <Radio><RadioDot $on />角度放坡形式</Radio>
            <Radio $l={200}><RadioDot />底宽放坡形式</Radio>
          </RadioRow>
          <CadDrawing />
          <ParamFoot><RebarBtn>配筋</RebarBtn></ParamFoot>
        </ParamInner>
      </ParamWindow>

      <EditDialog>
        <DlgTitle>
          <Logo s={16} />
          <DlgTitleText>编辑其它钢筋</DlgTitleText>
          <DlgCtl>
            <S w={11} h={11}><path d="M0 5.500h11" stroke="#c0c0c0" /></S>
            <At $l={29}><S w={11} h={11}><rect x=".5" y=".5" width="10" height="10" fill="none" stroke="#222" /></S></At>
            <At $l={35}><S w={11} h={11}><path d="M.5.500l10 10M10.500.500l-10 10" stroke="#222" /></S></At>
          </DlgCtl>
        </DlgTitle>
        <DlgBand>其它钢筋列表:</DlgBand>
        <DlgTable>
          <GridRow $cols={DLG_COLS} $h={19}>
            <Head /><Head $on>筋号</Head><Head>钢筋信息</Head><Head>图号</Head><Head>钢筋图形</Head><Head>根数</Head><Head>长度<Mono>(mm)</Mono></Head>
          </GridRow>
          <GridRow $cols={DLG_COLS} $h={38}>
            <NumCell $on>1</NumCell>
            <Cell $bg="#d8e8f8"><Mono>1</Mono></Cell>
            <Cell $pad={4}><S w={11} h={12}><path d="M1 6.500h9M1 6.500v3h9v-3M5.500 1v10M3 3.500h5v3H3z" fill="none" stroke="#222" /></S><Mono>8</Mono></Cell>
            <Cell><Mono>195</Mono></Cell>
            <Cell $pad={61}>
              <Mono>660</Mono>
              <At $l={18}>
                <S w={46} h={30}>
                  <rect x="1" y="2" width="44" height="27" rx="1" fill="#fff" stroke="#000" strokeWidth="2" />
                  <path d="M28 9l8-5M36 15l8-8" stroke="#000" strokeWidth="2" />
                  <text x="3" y="23" fill="#f00" fontSize="11" fontFamily="Liberation Sans, sans-serif">220</text>
                </S>
              </At>
            </Cell>
            <Cell><Mono>15</Mono></Cell>
            <Cell><Mono>2014</Mono></Cell>
          </GridRow>
          <GridRow $cols={DLG_COLS} $h={19}>
            <NumCell>2</NumCell><Cell /><Cell /><Cell /><Cell /><Cell /><Cell />
          </GridRow>
        </DlgTable>
        <DlgFoot>
          <DlgBtn>插入</DlgBtn>
          <DlgBtn $l={24}>删除</DlgBtn>
          <DlgBtn $auto $primary $w={71}>确定</DlgBtn>
          <DlgBtn $l={16} $w={71}>取消</DlgBtn>
        </DlgFoot>
      </EditDialog>

      <Sogou>
        <SogouMark>
          <S w={28} h={23}>
            <path d="M2 4L25 0l3 19-24 4z" fill="#f0521e" />
            <path d="M20 6.500H10.500v5h8.500v5H8" fill="none" stroke="#fff" strokeWidth="3.400" />
          </S>
        </SogouMark>
        <SogouBar>
          <SogouSlot>中</SogouSlot>
          <SogouSlot>°,</SogouSlot>
          <SogouSlot><S w={16} h={16}><circle cx="8" cy="8" r="6.800" fill="#fff" stroke="#1b73c4" strokeWidth="1.500" /><path d="M5 9.500c1 2 5 2 6 0" stroke="#1b73c4" fill="none" /><path d="M6 5v2M10 5v2" stroke="#1b73c4" /></S></SogouSlot>
          <SogouSlot><S w={13} h={18}><rect x="4" y="1" width="5" height="10" rx="2.500" fill="#1b73c4" /><path d="M1.500 7a5 5 0 0 0 10 0M6.500 12v4M3.500 16.500h6" stroke="#1b73c4" fill="none" /></S></SogouSlot>
          <SogouSlot><S w={16} h={14}><rect y="1" width="16" height="12" rx="1" fill="#1b73c4" /><path d="M2 4h12M2 7h12M4 10h8" stroke="#fff" strokeDasharray="1.500 1" /></S></SogouSlot>
          <SogouSlot><S w={15} h={18}><circle cx="7" cy="5" r="3.500" fill="#a9b8c4" /><path d="M1 11h13v6H1z" fill="#a9b8c4" /></S></SogouSlot>
          <SogouSlot><S w={15} h={16}><path d="M4 1h7l4 3-2 3-2-1v9H4V6L2 7 0 4z" fill="#1b73c4" /></S></SogouSlot>
          <SogouSlot><S w={15} h={16}><path d="M13 1l-3 3 1 2 2 1 2-3c1 3-2 6-5 5l-6 6-3-2 6-7c-1-3 2-6 6-5z" fill="#1b73c4" /></S></SogouSlot>
        </SogouBar>
      </Sogou>
      <Badge>67</Badge>
      <Marks viewBox="0 0 1366 768">
        <path d="M612 259c48 0 90 14 90 33 0 18-40 31-90 31-52 0-91-14-91-33 0-18 42-31 91-31z" fill="none" stroke="#f00" strokeWidth="3" />
        <path d="M228 349c72-2 134 26 134 62 0 36-56 67-128 67-72 0-127-28-127-66 0-34 50-61 121-63z" fill="none" stroke="#f00" strokeWidth="3" />
      </Marks>
    </Root>
  );
}
